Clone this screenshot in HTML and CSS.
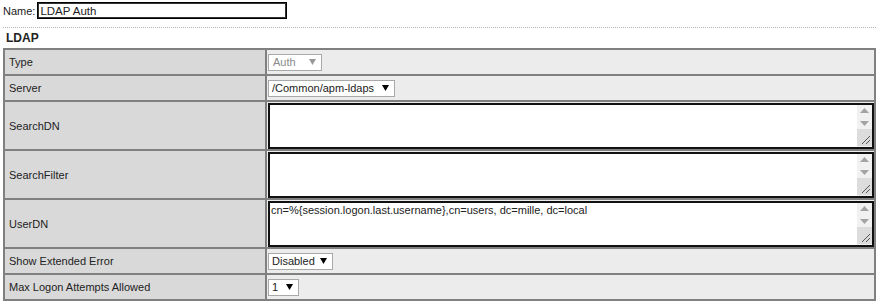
FILE: index.html
```html
<!DOCTYPE html>
<html lang="en">
<head>
  <meta charset="UTF-8">
  <title>LDAP Auth</title>
  <link rel="stylesheet" href="styles.css">
</head>
<body>
  <div class="name-row">
    <label for="nameInput">Name:</label>
    <input type="text" id="nameInput" class="name-input" value="LDAP Auth">
  </div>
  <div class="divider"></div>
  <h2 class="section-title">LDAP</h2>

  <table class="props">
    <colgroup>
      <col class="label-col">
      <col>
    </colgroup>
    <tbody>
      <tr class="row-single">
        <td class="label">Type</td>
        <td class="value">
          <span class="select select-disabled type-select">Auth <svg class="arrow" width="7" height="6" viewBox="0 0 7 6"><polygon points="0,0 7,0 3.5,6"/></svg></span>
        </td>
      </tr>
      <tr class="row-single">
        <td class="label">Server</td>
        <td class="value">
          <span class="select server-select">/Common/apm-ldaps <svg class="arrow" width="7" height="6" viewBox="0 0 7 6"><polygon points="0,0 7,0 3.5,6"/></svg></span>
        </td>
      </tr>
      <tr class="row-multi">
        <td class="label">SearchDN</td>
        <td class="value">
          <div class="textbox">
            <textarea class="textbox-input"></textarea>
            <div class="scrollbar">
              <div class="sb-btn"><svg width="9" height="5" viewBox="0 0 9 5"><polygon points="0,5 9,5 4.5,0"/></svg></div>
              <div class="sb-btn"><svg width="9" height="5" viewBox="0 0 9 5"><polygon points="0,0 9,0 4.5,5"/></svg></div>
              <div class="sb-track"></div>
              <div class="sb-corner"><svg width="9" height="9" viewBox="0 0 9 9"><path d="M1 9 L9 1 M5 9 L9 5"/></svg></div>
            </div>
          </div>
        </td>
      </tr>
      <tr class="row-multi">
        <td class="label">SearchFilter</td>
        <td class="value">
          <div class="textbox">
            <textarea class="textbox-input"></textarea>
            <div class="scrollbar">
              <div class="sb-btn"><svg width="9" height="5" viewBox="0 0 9 5"><polygon points="0,5 9,5 4.5,0"/></svg></div>
              <div class="sb-btn"><svg width="9" height="5" viewBox="0 0 9 5"><polygon points="0,0 9,0 4.5,5"/></svg></div>
              <div class="sb-track"></div>
              <div class="sb-corner"><svg width="9" height="9" viewBox="0 0 9 9"><path d="M1 9 L9 1 M5 9 L9 5"/></svg></div>
            </div>
          </div>
        </td>
      </tr>
      <tr class="row-multi">
        <td class="label">UserDN</td>
        <td class="value">
          <div class="textbox">
            <textarea class="textbox-input">cn=%{session.logon.last.username},cn=users, dc=mille, dc=local</textarea>
            <div class="scrollbar">
              <div class="sb-btn"><svg width="9" height="5" viewBox="0 0 9 5"><polygon points="0,5 9,5 4.5,0"/></svg></div>
              <div class="sb-btn"><svg width="9" height="5" viewBox="0 0 9 5"><polygon points="0,0 9,0 4.5,5"/></svg></div>
              <div class="sb-track"></div>
              <div class="sb-corner"><svg width="9" height="9" viewBox="0 0 9 9"><path d="M1 9 L9 1 M5 9 L9 5"/></svg></div>
            </div>
          </div>
        </td>
      </tr>
      <tr class="row-single">
        <td class="label">Show Extended Error</td>
        <td class="value">
          <span class="select error-select">Disabled <svg class="arrow" width="7" height="6" viewBox="0 0 7 6"><polygon points="0,0 7,0 3.5,6"/></svg></span>
        </td>
      </tr>
      <tr class="row-single">
        <td class="label">Max Logon Attempts Allowed</td>
        <td class="value">
          <span class="select attempts-select">1 <svg class="arrow" width="7" height="6" viewBox="0 0 7 6"><polygon points="0,0 7,0 3.5,6"/></svg></span>
        </td>
      </tr>
    </tbody>
  </table>
</body>
</html>
```

FILE: styles.css
```css
body {
  font-family: "Liberation Sans", Arial, sans-serif;
  font-size: 11px;
  color: #222;
  background: #fff;
  margin: 2px 3px;
}

.name-row {
  display: flex;
  align-items: center;
  gap: 2px;
  height: 17px;
}
.name-input {
  box-sizing: border-box;
  width: 250px;
  height: 17px;
  margin: 0;
  padding: 0 2px;
  border: 1px solid #000;
  box-shadow: inset 0 0 0 1px #333;
  font: inherit;
  font-size: 11.5px;
  color: #222;
}

.divider {
  margin-top: 8px;
  border-top: 1px dotted #b5b5b5;
  width: 873px;
}

.section-title {
  margin: 0;
  padding-left: 3px;
  font-size: 12px;
  line-height: 20px;
  font-weight: bold;
}

.props {
  width: 873px;
  border-collapse: collapse;
  border: 2px solid #808080;
}
.label-col {
  width: 262px;
}
.props td {
  border: 2px solid #808080;
  padding: 0;
}
.props .label {
  background: #d9d9d9;
  padding-left: 4px;
}
.props .value {
  background: #ececec;
  padding-left: 1px;
}
.row-single td {
  height: 24px;
}
.row-multi td {
  height: 47px;
}

.select {
  box-sizing: border-box;
  display: inline-flex;
  align-items: center;
  justify-content: space-between;
  height: 17px;
  padding: 0 5px 0 3px;
  background: #fff;
  border: 1px solid #a9a9a9;
  vertical-align: middle;
}
.select .arrow {
  fill: #000;
}
.select-disabled {
  color: #8a8a8a;
  padding-left: 4px;
}
.select-disabled .arrow {
  fill: #999;
}
.type-select {
  width: 54px;
}
.server-select {
  width: 127px;
}
.error-select {
  width: 65px;
}
.attempts-select {
  width: 31px;
}

.textbox {
  box-sizing: border-box;
  display: flex;
  height: 46px;
  width: 606px;
  border: 2px solid #111;
  background: #fff;
}
.textbox-input {
  flex: 1;
  border: none;
  margin: 0;
  padding: 1px 1px;
  resize: none;
  outline: none;
  font: inherit;
  color: #222;
  overflow: hidden;
}
.scrollbar {
  width: 15px;
  display: flex;
  flex-direction: column;
  background: #f1f1f1;
}
.sb-btn {
  height: 13px;
  display: flex;
  align-items: center;
  justify-content: center;
}
.sb-btn svg {
  fill: #a3a3a3;
}
.sb-track {
  flex: 1;
}
.sb-corner {
  height: 16px;
  background: #dcdcdc;
  display: flex;
  align-items: flex-end;
  justify-content: flex-end;
  padding: 0 2px 2px 0;
}
.sb-corner svg {
  stroke: #555;
  stroke-width: 1;
}
```
